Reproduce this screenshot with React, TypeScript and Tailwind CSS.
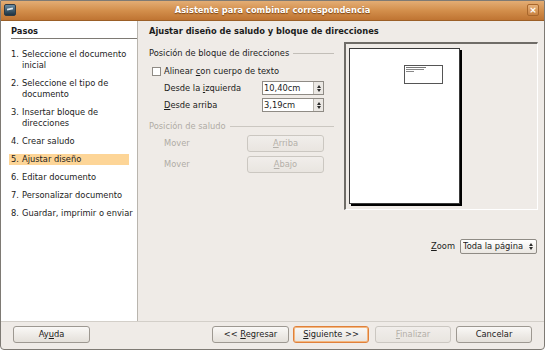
import React from 'react';

const font = { fontFamily: '"DejaVu Sans", "Liberation Sans", sans-serif' };

const steps = [
    ['1.', 'Seleccione el documento', 'inicial'],
    ['2.', 'Seleccione el tipo de', 'documento'],
    ['3.', 'Insertar bloque de', 'direcciones'],
    ['4.', 'Crear saludo'],
    ['5.', 'Ajustar diseño'],
    ['6.', 'Editar documento'],
    ['7.', 'Personalizar documento'],
    ['8.', 'Guardar, imprimir o enviar'],
];

function Btn({ children, disabled, focused, className }: { children: React.ReactNode; disabled?: boolean; focused?: boolean; className?: string }) {
    return (
        <div
            className={
                'flex h-[17px] items-center justify-center rounded-[3px] border bg-gradient-to-b text-[8.3px] ' +
                (disabled
                    ? 'border-[#cbc7c1] from-[#f1eeeb] to-[#e9e5e0] text-[#b4b0a9] '
                    : focused
                      ? 'border-[#e0803a] from-[#faf8f6] to-[#e8e4df] text-[#1c1c1c] shadow-[inset_0_0_0_1px_#f3b77f] '
                      : 'border-[#9d9891] from-[#faf8f6] to-[#e4e0da] text-[#1c1c1c] ') +
                (className ?? '')
            }
        >
            {children}
        </div>
    );
}

function Arrows() {
    return (
        <>
            <div className="h-0 w-0 border-x-[2.5px] border-b-[3px] border-x-transparent border-b-[#2c2c2c]" />
            <div className="h-0 w-0 border-x-[2.5px] border-t-[3px] border-x-transparent border-t-[#2c2c2c]" />
        </>
    );
}

function Spin({ value }: { value: string }) {
    return (
        <div className="flex h-[14px] w-[62px] border border-[#8f8b85] bg-white">
            <div className="flex flex-1 items-center pl-[1px] text-[8.3px] text-[#1c1c1c]">{value}</div>
            <div className="flex w-[10px] flex-col items-center justify-center gap-[1px] border-l border-[#b9b5ae] bg-[#ebe8e4]">
                <Arrows />
            </div>
        </div>
    );
}

export default function App(): React.ReactElement {
    return (
        <div style={font} className="flex h-[350px] w-[545px] flex-col overflow-hidden rounded-b-[4px] border border-[#7e7a74] bg-[#efebe7] text-[#1c1c1c]">
            {/* Title bar */}
            <div className="relative flex h-[20px] shrink-0 items-center justify-center border-b border-[#9b5f27] bg-gradient-to-b from-[#e3ad74] via-[#d38f4c] to-[#bf7432]">
                <div className="absolute top-[3px] left-[3px] h-[12px] w-[12px] rounded-[2px] border border-[#2e3b45] bg-gradient-to-b from-[#6b8da3] to-[#1f3442]">
                    <div className="mt-[3px] ml-[2px] h-[2px] w-[6px] -rotate-12 bg-[#dfe8ee]" />
                </div>
                <span className="text-[8.3px] font-bold text-white [text-shadow:0_1px_1px_#7a4413]">Asistente para combinar correspondencia</span>
                <div className="absolute top-[3px] right-[5px] flex h-[12px] w-[12px] items-center justify-center rounded-[2px] border border-[#a9672c] bg-gradient-to-b from-[#e7b27b] to-[#c98240] text-[9px] leading-none font-bold text-white">
                    ×
                </div>
            </div>

            {/* Main area */}
            <div className="flex h-[300px] shrink-0">
                {/* Steps panel */}
                <div className="w-[137px] shrink-0 border-r border-[#b9b5ae] bg-white pt-[4px]">
                    <div className="ml-[10px] h-[12px] text-[8.3px] leading-[12px] font-bold">Pasos</div>
                    <div className="mt-[1px] ml-[10px] h-px bg-[#7e7a74]" />
                    <div className="mt-[10px] flex flex-col gap-[7px]">
                        {steps.map((s) => (
                            <div
                                key={s[0]}
                                className={'mx-[8px] flex pl-[2px] text-[8.3px] leading-[11px] ' + (s[0] === '5.' ? 'bg-[#fdd597]' : '')}
                            >
                                <span className="w-[11px] shrink-0">{s[0]}</span>
                                <span className="whitespace-nowrap">
                                    {s[1]}
                                    {s[2] && <br />}
                                    {s[2]}
                                </span>
                            </div>
                        ))}
                    </div>
                </div>

                {/* Content */}
                <div className="flex-1 pt-[4px] pl-[11px]">
                    <div className="h-[12px] text-[8.3px] leading-[12px] font-bold">Ajustar diseño de saludo y bloque de direcciones</div>
                    <div className="mt-[5px] flex">
                        <div className="w-[185px] shrink-0">
                            <div className="mt-[5px] flex h-[12px] items-center gap-[4px] text-[8.3px]">
                                <span>Posición de bloque de direcciones</span>
                                <div className="h-px flex-1 bg-[#c2beb8]" />
                            </div>
                            <div className="mt-[5px] flex h-[14px] items-center gap-[3px] pl-[3px] text-[8.3px]">
                                <div className="h-[9px] w-[9px] border border-[#8f8b85] bg-white" />
                                <span>
                                    Alinear <u>c</u>on cuerpo de texto
                                </span>
                            </div>
                            <div className="mt-[3px] flex h-[14px] items-center pl-[15px] text-[8.3px]">
                                <span className="w-[98px]">
                                    Desde la <u>i</u>zquierda
                                </span>
                                <Spin value="10,40cm" />
                            </div>
                            <div className="mt-[3px] flex h-[14px] items-center pl-[15px] text-[8.3px]">
                                <span className="w-[98px]">
                                    <u>D</u>esde arriba
                                </span>
                                <Spin value="3,19cm" />
                            </div>
                            <div className="mt-[8px] flex h-[12px] items-center gap-[4px] text-[8.3px] text-[#b0aca5]">
                                <span>Posición de saludo</span>
                                <div className="h-px flex-1 bg-[#cbc7c1]" />
                            </div>
                            <div className="mt-[3px] flex items-center pl-[15px] text-[8.3px] text-[#b0aca5]">
                                <span className="w-[83px]">Mover</span>
                                <Btn disabled className="w-[77px]">
                                    <span>
                                        <u>A</u>rriba
                                    </span>
                                </Btn>
                            </div>
                            <div className="mt-[4px] flex items-center pl-[15px] text-[8.3px] text-[#b0aca5]">
                                <span className="w-[83px]">Mover</span>
                                <Btn disabled className="w-[77px]">
                                    <span>
                                        <u>A</u>bajo
                                    </span>
                                </Btn>
                            </div>
                        </div>

                        <div className="ml-[10px] flex w-[194px] flex-col">
                            {/* Preview */}
                            <div className="h-[168px] border-t-2 border-r border-b border-l-2 border-t-[#6f6c67] border-r-white border-b-white border-l-[#6f6c67] bg-[#efebe7] pt-[4px] pl-[3px]">
                                <div className="relative h-[156px] w-[111px] border border-[#3a3a3a] bg-white shadow-[2px_2px_0_#000]">
                                    <div className="absolute top-[16px] left-[54px] h-[19px] w-[39px] border border-[#555] px-[1px] pt-[1px]">
                                        <div className="h-px w-[20px] bg-[#777]" />
                                        <div className="mt-[1px] h-px w-[18px] bg-[#888]" />
                                        <div className="mt-[1px] h-px w-[8px] bg-[#888]" />
                                    </div>
                                </div>
                            </div>
                            <div className="mt-[29px] flex items-center justify-end gap-[5px] pr-[1px] text-[8.3px]">
                                <span>
                                    <u>Z</u>oom
                                </span>
                                <div className="flex h-[15px] w-[77px] items-center rounded-[2px] border border-[#8f8b85] bg-gradient-to-b from-white to-[#ebe7e2] pl-[2px]">
                                    <span className="flex-1 overflow-hidden whitespace-nowrap">Toda la página</span>
                                    <div className="flex w-[10px] shrink-0 flex-col items-center gap-[1px]">
                                        <Arrows />
                                    </div>
                                </div>
                            </div>
                        </div>
                    </div>
                </div>
            </div>

            {/* Bottom buttons */}
            <div className="flex flex-1 items-center border-t border-[#d3cfc9] px-[12px] pb-[2px]">
                <Btn className="w-[77px]">
                    <span>
                        Ay<u>u</u>da
                    </span>
                </Btn>
                <div className="flex-1" />
                <div className="flex">
                    <Btn className="w-[77px]">
                        <span>
                            &lt;&lt; <u>R</u>egresar
                        </span>
                    </Btn>
                    <Btn focused className="ml-[4px] w-[76px]">
                        <span>
                            <u>S</u>iguiente &gt;&gt;
                        </span>
                    </Btn>
                    <Btn disabled className="ml-[6px] w-[76px]">
                        <span>
                            <u>F</u>inalizar
                        </span>
                    </Btn>
                    <Btn className="ml-[5px] w-[76px]">
                        <span>Cancelar</span>
                    </Btn>
                </div>
            </div>
        </div>
    );
}
